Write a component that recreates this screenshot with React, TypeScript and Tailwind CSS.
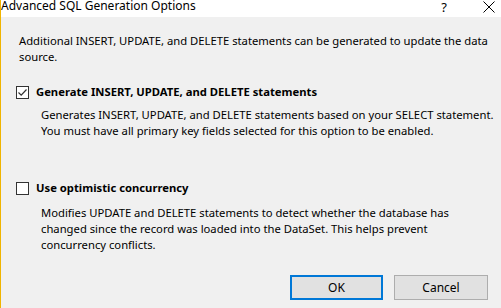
export default function App() {
  return (
    <div className="flex h-[308px] w-[501px] overflow-hidden font-['Noto_Sans',sans-serif] text-[11.25px] text-black">
      <div className="w-px shrink-0 bg-[#f0b400]" />
      <div className="flex min-w-0 flex-1 flex-col overflow-hidden bg-[#f0f0f0]">
        {/* Title bar */}
        <div className="flex h-[17px] items-start justify-between bg-white">
          <span className="-mt-[1px] whitespace-nowrap text-[12px] leading-[14px]">Advanced SQL Generation Options</span>
          <div className="flex items-start">
            <span className="mr-[36px] text-[13px] leading-[14px]">?</span>
            <svg width="12" height="12" viewBox="0 0 12 12" className="mr-[6px] mt-[1px]">
              <path d="M0.5 0.5 L11.5 11.5 M11.5 0.5 L0.5 11.5" stroke="#000" strokeWidth="1" />
            </svg>
          </div>
        </div>

        <div className="flex flex-1 flex-col pl-[18px] pr-2">
          <p className="mt-[16px] whitespace-nowrap leading-[16px]">
            Additional INSERT, UPDATE, and DELETE statements can be generated to update the data
            <br />
            source.
          </p>

          <div className="mt-[19px] flex items-center gap-[7px]">
            <span className="-ml-[3px] flex h-[13px] w-[13px] items-center justify-center border border-[#333] bg-white">
              <svg width="11" height="11" viewBox="0 0 11 11">
                <path d="M1.5 5.5 L4.2 8.2 L9.5 2.5" fill="none" stroke="#333" strokeWidth="1.2" />
              </svg>
            </span>
            <span className="font-bold leading-[16px]">Generate INSERT, UPDATE, and DELETE statements</span>
          </div>
          <p className="mt-[7px] whitespace-nowrap pl-[22px] leading-[16px]">
            Generates INSERT, UPDATE, and DELETE statements based on your SELECT statement.
            <br />
            You must have all primary key fields selected for this option to be enabled.
          </p>

          <div className="mt-[41px] flex items-center gap-[7px]">
            <span className="-ml-[3px] h-[13px] w-[13px] border border-[#333] bg-white" />
            <span className="font-bold leading-[16px]">Use optimistic concurrency</span>
          </div>
          <p className="mt-[9px] whitespace-nowrap pl-[22px] leading-[16px]">
            Modifies UPDATE and DELETE statements to detect whether the database has
            <br />
            changed since the record was loaded into the DataSet. This helps prevent
            <br />
            concurrency conflicts.
          </p>

          <div className="mt-auto mb-[8px] flex justify-end gap-[11px] pr-[5px]">
            <button className="h-[25px] w-[93px] border-2 border-[#0078d7] bg-[#e1e1e1] text-[12px] leading-none">OK</button>
            <button className="h-[25px] w-[94px] border border-[#adadad] bg-[#e1e1e1] text-[12px] leading-none">Cancel</button>
          </div>
        </div>
      </div>
    </div>
  );
}
